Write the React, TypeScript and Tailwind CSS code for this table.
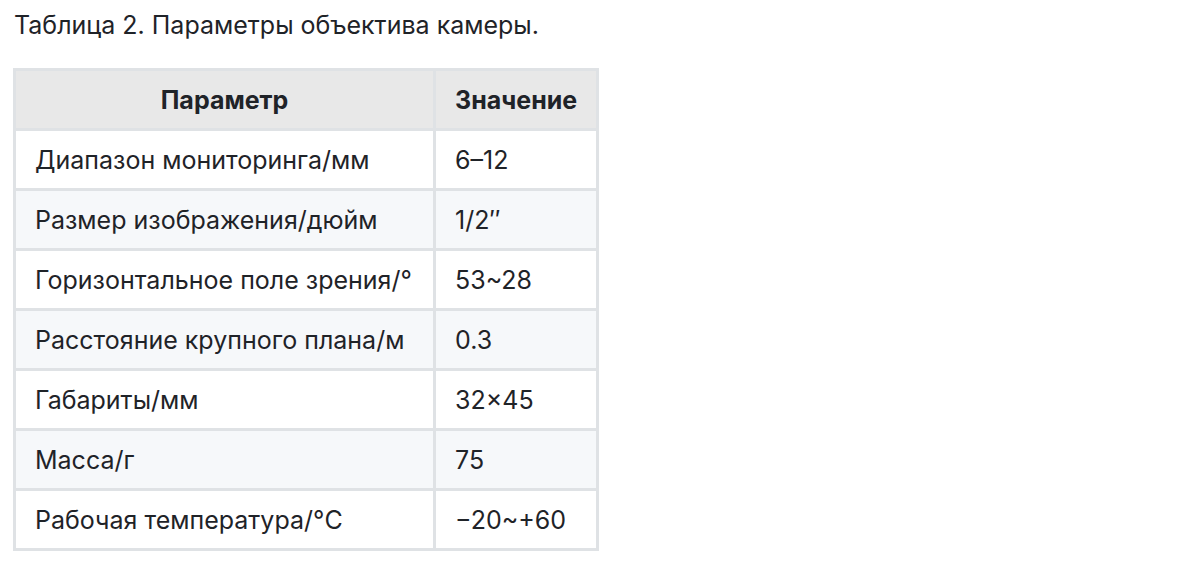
import React from 'react';

const rows: [string, string][] = [
    ['Диапазон мониторинга/мм', '6–12'],
    ['Размер изображения/дюйм', '1/2″'],
    ['Горизонтальное поле зрения/°', '53~28'],
    ['Расстояние крупного плана/м', '0.3'],
    ['Габариты/мм', '32×45'],
    ['Масса/г', '75'],
    ['Рабочая температура/°C', '−20~+60'],
];

const App: React.FC = () => {
    return (
        <div className="min-h-[564px] bg-white px-[14px] pt-[10px] text-[#1f2328] font-['Inter','Liberation_Sans',sans-serif]">
            <p className="text-[25px] leading-[30px]">Таблица 2. Параметры объектива камеры.</p>
            <table className="mt-[28px] -ml-[1px] border-collapse text-[25px] leading-[30px]">
                <thead>
                    <tr className="h-[60px] bg-[#e8e8e8]">
                        <th className="w-[420px] border-[3px] border-[#dfe2e5] px-[19px] font-bold text-center">Параметр</th>
                        <th className="border-[3px] border-[#dfe2e5] px-[19px] font-bold text-center">Значение</th>
                    </tr>
                </thead>
                <tbody>
                    {rows.map(([param, value], i) => (
                        <tr key={param} className={`h-[60px] ${i % 2 === 1 ? 'bg-[#f6f8fa]' : 'bg-white'}`}>
                            <td className="border-[3px] border-[#dfe2e5] px-[19px]">{param}</td>
                            <td className="border-[3px] border-[#dfe2e5] px-[19px]">{value}</td>
                        </tr>
                    ))}
                </tbody>
            </table>
        </div>
    );
};

export default App;
